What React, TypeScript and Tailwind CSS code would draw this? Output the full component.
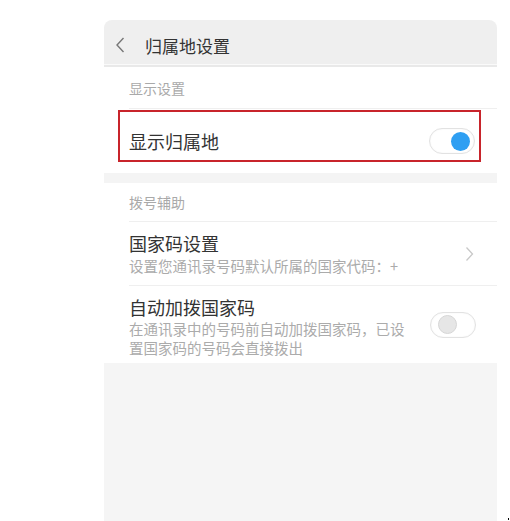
import React from "react";

const font = { fontFamily: '"Noto Sans CJK SC", "Noto Sans", sans-serif' };

function Toggle({ on }: { on: boolean }) {
  return (
    <div className="flex h-[26px] w-[46px] items-center rounded-full border border-[#e2e2e2] bg-white px-[3px] shadow-[inset_0_0_2px_rgba(0,0,0,0.06)]">
      {on ? (
        <div className="ml-auto mr-[1px] h-[19px] w-[19px] rounded-full bg-[#2f9ff2]" />
      ) : (
        <div className="ml-[4px] h-[19px] w-[19px] rounded-full border border-[#d6d6d6] bg-[#e6e6e6]" />
      )}
    </div>
  );
}

function SectionLabel({ text, className }: { text: string; className: string }) {
  return (
    <div className={`flex items-center pl-[25px] text-[14px] text-[#a9a9a9] ${className}`}>
      {text}
    </div>
  );
}

export default function App() {
  return (
    <div className="relative h-[521px] w-[510px] overflow-hidden bg-white pt-[20px]" style={font}>
      <div className="ml-[104px] flex h-[501px] w-[393px] flex-col overflow-hidden rounded-t-[8px] bg-white">
        {/* header */}
        <div className="flex h-[44px] shrink-0 items-center bg-[#efefef] pl-[11px] pt-[6px]">
          <svg width="10" height="16" viewBox="0 0 10 16" fill="none">
            <path d="M8.5 1 L2 8 L8.5 15" stroke="#777" strokeWidth="1.4" />
          </svg>
          <span className="ml-[20px] text-[17px] leading-none text-[#333]">归属地设置</span>
        </div>
        <div className="h-px shrink-0 bg-[#fafafa]" />
        <div className="h-[2px] shrink-0 bg-[#e9e9e9]" />

        <SectionLabel text="显示设置" className="h-[41px] shrink-0 pt-[2px]" />
        <div className="ml-[25px] h-px shrink-0 bg-[#efefef]" />

        <div className="relative flex h-[64px] shrink-0 items-center justify-between pl-[25px] pr-[22px]">
          <span className="text-[18px] text-[#333]">显示归属地</span>
          <Toggle on />
          <div className="absolute left-[14px] top-[1px] h-[52px] w-[363px] border-2 border-[#c8242b]" />
        </div>

        <div className="h-[10px] shrink-0 bg-[#f4f4f4]" />

        <SectionLabel text="拨号辅助" className="h-[38px] shrink-0" />
        <div className="ml-[25px] h-px shrink-0 bg-[#efefef]" />

        <div className="flex h-[63px] shrink-0 items-center justify-between pl-[25px] pr-[23px]">
          <div className="flex flex-col self-start pt-[9px]">
            <span className="text-[18px] leading-[24px] text-[#333]">国家码设置</span>
            <span className="mt-px text-[14.5px] leading-[20px] text-[#ababab]">
              设置您通讯录号码默认所属的国家代码：+
            </span>
          </div>
          <svg width="9" height="16" viewBox="0 0 9 16" fill="none">
            <path d="M1.5 1.5 L7.5 8 L1.5 14.5" stroke="#c8c8c8" strokeWidth="1.3" />
          </svg>
        </div>
        <div className="ml-[25px] h-px shrink-0 bg-[#efefef]" />

        <div className="flex h-[77px] shrink-0 items-center justify-between pl-[25px] pr-[21px]">
          <div className="flex flex-col self-start pt-[9px]">
            <span className="text-[18px] leading-[24px] text-[#333]">自动加拨国家码</span>
            <span className="w-[282px] text-[14.5px] leading-[19px] text-[#ababab]">
              在通讯录中的号码前自动加拨国家码，已设置国家码的号码会直接拨出
            </span>
          </div>
          <Toggle on={false} />
        </div>

        <div className="flex-1 bg-[#f5f5f5]" />
      </div>
      <div className="absolute bottom-[1px] right-[1px] h-[2px] w-px bg-black" />
    </div>
  );
}
